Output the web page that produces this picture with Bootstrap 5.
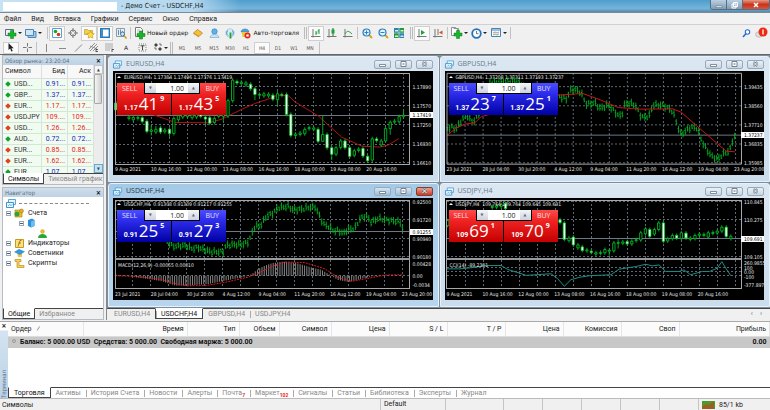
<!DOCTYPE html>
<html lang="ru">
<head>
<meta charset="utf-8">
<meta name="viewport" content="width=device-width, initial-scale=1">
<title>Демо Счет - USDCHF,H4</title>
<link href="https://cdn.jsdelivr.net/npm/bootstrap@5.3.0/dist/css/bootstrap.min.css" rel="stylesheet">
<style>
:root{--ui:"Open Sans","Noto Sans",sans-serif;--slim:Roboto,"Open Sans",sans-serif;--num:"DejaVu Sans Condensed","DejaVu Sans",sans-serif}
body{height:100vh;font:7px/10px var(--ui);color:#222;background:#f0f0f0;overflow:hidden}
button,input{font:inherit;color:inherit;border:0;background:none;padding:0;margin:0}
a{color:inherit;text-decoration:none}
svg{display:block;overflow:visible}
.titlebar{height:13px;background:linear-gradient(#4f9dcb,#74b4dc 70%,#5a88a8);border-bottom:1px solid #7a8b98}
.titlebar .glow{background:linear-gradient(90deg,#c6e2f3,#b4d8ef 80%,#74b4dc00);padding-left:3px;width:240px;height:12px;font:7px/10px "DejaVu Sans Condensed",sans-serif}
.titlebar .patch{width:114px;height:9px;background:#fff}
.winctl{height:10px;border:1px solid #526f86;border-top:0;border-radius:0 0 3px 3px;overflow:hidden}
.winctl button{width:16px;height:9px;background:linear-gradient(#b9d0e1,#7f9db5);border-right:1px solid #526f86}
.winctl .quit{width:26px;border:0;background:linear-gradient(#e59a86,#c9341b 50%,#d8553c)}
.menubar{height:12px;padding-left:4px;gap:10px;background:#f2f2f2;border-bottom:1px solid #d0d0d0;font-family:var(--slim)}
.toolrow{height:16px;padding-left:3px}
.toolrow.second{height:14px;border-bottom:1px solid #666}
.tool{width:16px;height:15px;display:flex;align-items:center;justify-content:center;flex:none}
.second .tool{height:12px;font:5px/10px var(--num);color:#555}
.tool.wide{width:auto;gap:2px;padding:0 2px}
.tool.drop{width:20px;gap:1px}
.tool.drop::after{content:"";border:2px solid transparent;border-top-color:#222;border-bottom:0}
.tool.on{background:#fbfbfb;box-shadow:inset 0 0 0 1px #cfcfcf}
.sep{width:1px;height:12px;background:#c2c2c2;margin:0 1px}
.grip{width:3px;height:12px;border-left:1px solid #bbb;border-right:1px solid #bbb;margin:0 1px 0 3px}
.tooltext{font:6px/10px "DejaVu Sans",sans-serif;color:#222}
.workspace{min-height:0}
.side{width:106px;padding:0 2px;flex:none;font-family:var(--slim)}
.pane{border:1px solid #b4bcc4;background:#f0f0f0}
.pane+.pane{margin-top:2px}
.panehead{height:9px;padding:0 2px;background:linear-gradient(#cfdeeb,#bdd2e5);color:#5d6f80;font:6px/9px var(--num)}
.closex{font:bold 7px/8px var(--num);color:#111}
.watch{background:#fff;height:108px;overflow:hidden}
.watch table{width:91px;table-layout:fixed;line-height:10px}
.watch .bid{width:26px}
.watch th,.watch td{height:11px;padding:0 2px;border-right:1px solid #d9e3da;border-bottom:1px solid #d4e6d6;text-align:right;white-space:nowrap;background:#f1fcf1}
.watch th{height:13px;font-weight:400;background:#f8f8f8;border-color:#ddd}
.watch th:first-child,.watch td:first-child{text-align:left;color:#333}
.watch .up{color:#2323c4}.watch .dn{color:#ec2020}
.dia{display:inline-block;width:4px;height:4px;transform:rotate(45deg);margin:0 4px 0 1px;background:#11a22c}
.dia.red{background:#e2411a}
.bar{width:9px;background:#ececec}
.bar button{width:9px;height:9px;border:1px solid #c0c4c8;background:#f6f6f6;font:4px/6px var(--num);color:#444}
.bar .low{background:#bfe2f5;border-color:#6aa9cc}
.thumb{width:8px;height:30px;border:1px solid #a8a8a8;border-radius:1px;background:linear-gradient(90deg,#f5f5f5,#cfcfcf)}
.tabline{border-top:1px solid #444;height:11px}
.tabline button{color:#888;padding:0 5px;height:10px;line-height:10px;position:relative;white-space:nowrap}
.tabline button+button::before{content:"";float:left;width:1px;height:7px;margin:2px 0 0 -5px;background:#aaa}
.tabline .cur{background:#fff;color:#111;border:1px solid #444;border-top-color:#fff;margin-top:-1px;height:11px}
.tabline .cur+button::before{background:transparent}
.pane .tabline button{padding:0 4px}
.tree{background:#fff;padding:1px 3px;line-height:10px}
.tree ul{list-style:none;margin:0;padding:0}
.tree li>div{height:10px;gap:3px}
.tree .kid{padding-left:13px}.tree .kid2{padding-left:32px}
.tgl{width:5px;height:5px;border:1px solid #9aa7b5;background:#fff;position:relative}
.tgl::after{content:"";position:absolute;left:0;right:0;top:1px;height:1px;background:#47617c}
.dash{width:70px;border-top:1px dashed #888}
.desk{background:#f0f0f0;border-left:1px solid #888;min-width:0}
.mdi{display:grid;grid-template-columns:1fr 1fr;grid-template-rows:127fr 124fr;background:#7d8d9b;gap:1px;padding:1px 0 1px 1px}
.chartwin{background:linear-gradient(#dbe7f2,#cbdcec);padding:0 5px 6px 4px;min-width:0;border:1px solid #e8f2fa;border-radius:3px 3px 0 0}
.chartwin.active{background:linear-gradient(#a5cae8,#b7d5ee)}
.chartwin header{height:14px;color:#6b7a88}
.chartwin.active header{color:#26384a}
.cwbtn{width:17px;height:9px;border:1px solid #98a9b8;border-radius:2px;background:linear-gradient(#eaf1f7,#c8d6e3);display:flex;align-items:center;justify-content:center}
.active .cwbtn{background:linear-gradient(#d5e6f3,#9dbdd8)}
.active .cwbtn.kill{background:linear-gradient(#e8a191,#c93b22);border-color:#8c3a2c}
.screen{background:#000;color:#e6e6e6;font:5px/7px var(--num);min-height:0;overflow:hidden}
.plotrow{min-height:0;padding:2px 0 0 2px}
.plot{position:relative;min-width:0}
.plot svg{position:absolute;inset:0;width:100%;height:100%}
.yaxis{width:23px;position:relative;line-height:4px}
.yaxis span{position:absolute;left:3px;transform:translateY(-50%)}
.yaxis .now{background:#fff;color:#000;left:0;right:0;padding-left:3px;line-height:6px}
.xaxis{height:11px;position:relative;margin-left:2px}
.xaxis span{position:absolute;top:2px;white-space:nowrap}
.quote{position:absolute;left:9px;top:1px;white-space:nowrap}
.quote::before{content:"";position:absolute;left:-7px;top:2px;border:2px solid transparent;border-top:0;border-bottom-color:#fff}
.study{position:absolute;left:3px;top:69%}
.trade{position:absolute;left:2px;top:10px;width:109px;height:32px;background:#000;gap:1px}
.trade>button{width:54px;height:32px;color:#fff;text-align:left;background:linear-gradient(#ff4a4a,#ef2222 35%,#c40000)}
.blue .trade>button{background:linear-gradient(#4d4dff,#2b2bea 35%,#0000a4)}
.trade em{font:7px/12px var(--ui);display:block;padding:0 5px;opacity:.85}
.trade .buy em{text-align:right;padding-right:7px}
.trade .px{justify-content:center;line-height:20px;height:20px}
.trade b{font:bold 7px/9px var(--slim);margin-top:9px}
.trade strong{font:400 17px/20px var(--ui);margin:-1px 1px 0}
.trade sup{font:bold 7px/8px var(--ui);top:0;margin-left:1px}
.lots{position:absolute;left:27px;top:0;width:56px;height:11px;background:#000;padding:0 1px 1px}
.lots input{width:32px;flex:1;background:#fff;color:#222;text-align:right;font:7px/9px var(--ui);padding-right:4px;min-width:0}
.lots button{width:11px;background:linear-gradient(#f5f5f5,#ccd3e2);color:#667;font:4px/10px var(--num)}
.mditabs{height:12px;padding-left:2px}
.mditabs,.bottom{font-family:var(--slim)}
.terminal{height:77px;border-top:1px solid #aaa;margin-top:1px}
.vert{width:9px;background:linear-gradient(#fff 8px,#d3e3f1 9px,#bcd2e6)}
.vert span{writing-mode:vertical-rl;transform:rotate(180deg);color:#55708b;font:6px/8px var(--num)}
.orders{width:100%;table-layout:fixed;line-height:10px}
.orders th{height:14px;font-weight:400;text-align:right;padding:0 3px;border-right:1px solid #e6e6e6;border-bottom:1px solid #ddd;background:#fbfbfb}
.orders th:first-child{text-align:left}
.orders td{height:12px;background:#c8c8c8;font-weight:700;padding:0 3px;color:#111}
.cA{width:75px}.cB{width:104px}.cC{width:52px}.cD{width:40px}.cE{width:52px}.cF{width:58px}
.ring{display:inline-block;width:4px;height:4px;border:1px solid #999;border-radius:50%;margin:0 4px 1px 1px}
.tabline i{font:bold 5px/4px var(--slim);color:#e22;vertical-align:-2px}
.status{height:12px;border-top:1px solid #bbb;padding-left:2px}
.status span{height:11px;border-left:1px solid #c4c4c4;padding-left:3px;width:39px}
.status .profile{width:65px}.status .hint{width:58px}.status .link{width:72px}
</style>
<script src="https://cdn.jsdelivr.net/npm/bootstrap@5.3.0/dist/js/bootstrap.bundle.min.js"></script>
</head>
<body class="d-flex flex-column">

<svg width="0" height="0" class="position-absolute">
 <defs>
  <g id="winicon"><path d="M2.500 .5h7v5h-7z" fill="#eaf6ff" stroke="#5aa6d6"/><path d="M.5 3.500h7v5h-7z" fill="#eaf6ff" stroke="#3f93ca"/><path d="M2 7l1.500-1.500L5 6.500l1.500-1" fill="none" stroke="#3f93ca" stroke-width=".7"/></g>
  <g id="plus"><path d="M2.500 0h3v2.500H8v3H5.500V8h-3V5.500H0v-3h2.500z" fill="#16b62a" stroke="#0a7a18" stroke-width=".5"/></g>
 </defs>
</svg>

<div class="titlebar d-flex justify-content-between">
  <div class="glow d-flex align-items-center"><div class="patch"></div><span class="ms-1">- Демо Счет - USDCHF,H4</span></div>
  <div class="winctl d-flex">
    <button aria-label="Свернуть"><svg width="16" height="8"><path d="M5 5h6v1.500H5z" fill="#fff" stroke="#445" stroke-width=".4"/></svg></button>
    <button aria-label="Развернуть"><svg width="16" height="8"><path d="M6.500 1.500h4v4h-4zM5 3h4v4H5z" fill="none" stroke="#fff"/></svg></button>
    <button class="quit" aria-label="Закрыть"><svg width="26" height="8"><path d="M11 2l4 4m0-4l-4 4" stroke="#fff" stroke-width="1.500"/></svg></button>
  </div>
</div>

<nav class="menubar d-flex align-items-center">
  <a href="#">Файл</a><a href="#">Вид</a><a href="#">Вставка</a><a href="#">Графики</a><a href="#">Сервис</a><a href="#">Окно</a><a href="#">Справка</a>
</nav>

<div class="toolrow d-flex align-items-center">
  <button class="tool drop" aria-label="Новый график"><svg width="12" height="11"><path d="M.5 1.500h8v6h-8z" fill="#eef" stroke="#668"/><use href="#plus" x="3" y="2.500"/></svg></button>
  <button class="tool drop" aria-label="Профили"><svg width="12" height="11"><path d="M3 3.500h8v6H3z" fill="#9dc8e8" stroke="#4a88b8"/><path d="M.5 1.500h8v6h-8z" fill="#cfe5f5" stroke="#4a88b8"/></svg></button>
  <span class="sep ms-1"></span>
  <button class="tool on" aria-label="Обзор рынка"><svg width="10" height="10"><path d="M.5.5h9v9h-9z" fill="#fff" stroke="#5b9fd0"/><circle cx="3.500" cy="3.500" r="1.800" fill="#16a82c"/><circle cx="6.500" cy="6.500" r="1.800" fill="#d93a1b"/></svg></button>
  <button class="tool" aria-label="Окно данных"><svg width="10" height="10"><circle cx="5" cy="5" r="3" fill="none" stroke="#777"/><path d="M5 0v4M5 6v4M0 5h4M6 5h4" stroke="#777"/></svg></button>
  <button class="tool on" aria-label="Навигатор"><svg width="11" height="11"><path d="M.5 1.500h3l1 1h4v4h-8z" fill="#f4cf52" stroke="#b98d17" stroke-width=".6"/><path d="M6.500 3l1.200 2.300 2.600.4-1.900 1.800.5 2.600-2.400-1.200-2.300 1.200.4-2.600L2.700 5.700l2.600-.4z" fill="#ffdf3f" stroke="#c0921a" stroke-width=".6"/></svg></button>
  <button class="tool on" aria-label="Терминал"><svg width="10" height="10"><path d="M.7.7h8.600v8.600H.7z" fill="#fff" stroke="#2b77b8" stroke-width="1.400"/><path d="M1 1h2v8H1z" fill="#3c8fce"/></svg></button>
  <button class="tool" aria-label="Тестер"><svg width="11" height="11"><path d="M.5.5h8v8h-8z" fill="#e9eef3" stroke="#8b9cab"/><path d="M2.500 2v5M4.500 1.500v4M6.500 3v3" stroke="#6a8cab"/><circle cx="6.500" cy="6" r="2" fill="#cfe7f8" stroke="#47a"/><path d="M8 7.500l2.500 3" stroke="#c90" stroke-width="1.300"/></svg></button>
  <span class="sep"></span>
  <button class="tool wide"><svg width="11" height="12"><path d="M1.500.5h5l2 2v7h-7z" fill="#fff" stroke="#777"/><path d="M3 3h3M3 5h3" stroke="#999" stroke-width=".7"/><use href="#plus" x="3" y="4"/></svg><span class="tooltext">Новый ордер</span></button>
  <button class="tool" aria-label="MetaEditor"><svg width="10" height="10"><path d="M.5 5l4-3.500L9.500 5 6 8.500z" fill="#f5bf3a" stroke="#b27a11" stroke-width=".7"/><path d="M.5 5l5.500 3.500v1L.5 6z" fill="#d0922a"/></svg></button>
  <button class="tool" aria-label="Чат"><svg width="11" height="11"><circle cx="5.500" cy="3.500" r="2.700" fill="#5db2ea" stroke="#2a7dba" stroke-width=".6"/><path d="M1 9.500c0-4 9-4 9 0z" fill="#c9e4f6" stroke="#6aa5cc" stroke-width=".6"/></svg></button>
  <button class="tool" aria-label="Сигналы"><svg width="11" height="11"><circle cx="5" cy="5" r="4.200" fill="#d9ecf6" stroke="#9cc6da" stroke-width=".8"/><path d="M2.500 2.500c-1.200 2-1 4 .5 5M7.500 2.500c1.200 2 1 4-.5 5" fill="none" stroke="#3b90c0"/><path d="M5.500 4.500v6" stroke="#1aa536" stroke-width="1.800"/></svg></button>
  <button class="tool wide"><svg width="11" height="11"><path d="M1 4c0-4 8-4 8 0z" fill="#4ba3dc" stroke="#2775a8" stroke-width=".5"/><path d="M1.500 4h7l-1 5h-5z" fill="#f1c544"/><circle cx="7.500" cy="7.500" r="3" fill="#dd2b1c"/><path d="M6.300 6.500h2.400v2H6.300z" fill="#fff"/></svg><span class="tooltext">Авто-торговля</span></button>
  <span class="grip"></span>
  <button class="tool on" aria-label="Бары"><svg width="10" height="10"><path d="M2 1v8.500M0 8.500h9.500" stroke="#777"/><path d="M5 3v4M8 1v5M5 5h1.500M6.500 3H8" stroke="#1a9a30"/></svg></button>
  <button class="tool" aria-label="Свечи"><svg width="10" height="10"><path d="M2 1v8.500M0 8.500h9.500" stroke="#777"/><path d="M6 0v8" stroke="#117a24"/><path d="M4.500 1.500h3v4h-3z" fill="#18a532"/></svg></button>
  <button class="tool" aria-label="Линия"><svg width="10" height="10"><path d="M2 1v8.500M0 8.500h9.500" stroke="#777"/><path d="M2 6c2-4 4-3 7 0" fill="none" stroke="#2aa744"/></svg></button>
  <span class="sep"></span>
  <button class="tool" aria-label="Крупнее"><svg width="11" height="11"><path d="M6.500 6.500L10 10" stroke="#d9a520" stroke-width="2"/><circle cx="4.500" cy="4.500" r="3.500" fill="#e2f2fd" stroke="#2c81c0" stroke-width="1.200"/><path d="M4.500 2.500v4M2.500 4.500h4" stroke="#2c81c0"/></svg></button>
  <button class="tool" aria-label="Мельче"><svg width="11" height="11"><path d="M6.500 6.500L10 10" stroke="#d9a520" stroke-width="2"/><circle cx="4.500" cy="4.500" r="3.500" fill="#e2f2fd" stroke="#2c81c0" stroke-width="1.200"/><path d="M2.500 4.500h4" stroke="#2c81c0"/></svg></button>
  <button class="tool" aria-label="Окна мозаикой"><svg width="10" height="10"><path d="M0 0h4.700v4.700H0zM5.300 5.300H10V10H5.300z" fill="#2c7fc0"/><path d="M5.300 0H10v4.700H5.300zM0 5.300h4.700V10H0z" fill="#239a3a"/><path d="M1 2h3v1.500H1zM6.500 2h3v1.500h-3zM1 7.500h3V9H1zM6.500 7.500h3V9h-3z" fill="#d9f0d9"/></svg></button>
  <span class="grip"></span>
  <button class="tool on" aria-label="Автопрокрутка"><svg width="10" height="10"><path d="M2 1v8.500M0 8.500h9.500" stroke="#777"/><path d="M4 2l4 2.500L4 7z" fill="#18a532"/></svg></button>
  <button class="tool" aria-label="Сдвиг"><svg width="10" height="10"><path d="M2 1v8.500M0 8.500h9.500M5 1v6" stroke="#777"/><path d="M9.500 2.500L6 4.500l3.500 2z" fill="#d9531b"/></svg></button>
  <span class="sep"></span>
  <button class="tool drop" aria-label="Индикаторы"><svg width="12" height="12"><path d="M.5.5h4l2 2v6h-6zM2.500 1.500h5v7" fill="#fff" stroke="#777" stroke-width=".8"/><use href="#plus" x="3" y="3.500"/></svg></button>
  <button class="tool drop" aria-label="Период"><svg width="11" height="11"><circle cx="5.500" cy="5.500" r="4.300" fill="#fff" stroke="#1f73bd" stroke-width="1.800"/><path d="M5.500 3v2.700H7.500" fill="none" stroke="#555" stroke-width=".8"/></svg></button>
  <button class="tool drop" aria-label="Шаблоны"><svg width="11" height="10"><path d="M.5.5h9v8h-9z" fill="#f4faff" stroke="#4186ba"/><path d="M.5 2h9" stroke="#4186ba"/><path d="M2 5l2-1 2 1 2-1" stroke="#c55" fill="none" stroke-width=".7"/><path d="M2 7l2-1 2 1 2-1" stroke="#3a9a48" fill="none" stroke-width=".7"/></svg></button>
  <span class="sep"></span>
  <div class="ms-auto d-flex">
    <button class="tool" aria-label="Поиск"><svg width="9" height="9"><circle cx="5.500" cy="3" r="2.200" fill="#fff" stroke="#2b6cd0" stroke-width="1.100"/><path d="M4 4.500L1 8" stroke="#2b6cd0" stroke-width="1.600"/></svg></button>
    <button class="tool" aria-label="Уведомления"><svg width="14" height="12"><ellipse cx="4" cy="7.500" rx="3.500" ry="2.800" fill="#ddd" stroke="#aaa" stroke-width=".6"/><circle cx="8" cy="5" r="4.500" fill="#ee2a12"/><path d="M8 2.500v5" stroke="#fff" stroke-width="1.300"/></svg></button>
  </div>
</div>

<div class="toolrow second d-flex align-items-center">
  <button class="tool on" aria-label="Курсор"><svg width="8" height="9"><path d="M1.500 0v7l1.700-1.500L4.300 8.500l1.400-.6-1.200-2.700h2.200z" fill="#222"/></svg></button>
  <button class="tool" aria-label="Перекрестие"><svg width="9" height="9"><path d="M4.500 0v3.500M4.500 5.500V9M0 4.500h3.500M5.500 4.500H9" stroke="#777"/></svg></button>
  <span class="sep"></span>
  <button class="tool" aria-label="Вертикальная линия"><svg width="9" height="8"><path d="M4.500 0v8" stroke="#888"/></svg></button>
  <button class="tool" aria-label="Горизонтальная линия"><svg width="9" height="8"><path d="M1 4.500h7" stroke="#888"/></svg></button>
  <button class="tool" aria-label="Трендовая линия"><svg width="9" height="8"><path d="M1 7.500L8 .5" stroke="#888"/></svg></button>
  <button class="tool" aria-label="Канал"><svg width="10" height="9"><path d="M0 6L6 0M1 8L8 1M4 8l5-5M1 3l7 3" stroke="#777" stroke-width=".8"/><path d="M7 6v3M7 6.500h2M7 8.500h2" stroke="#222" stroke-width=".7"/></svg></button>
  <button class="tool" aria-label="Фибоначчи"><svg width="10" height="9"><path d="M0 1h8M0 3h8M0 5h8M0 7h5" stroke="#999" stroke-width=".8"/><path d="M7 6v3M7 6.500h2" stroke="#222" stroke-width=".7"/></svg></button>
  <button class="tool" aria-label="Текст"><span class="tooltext">A</span></button>
  <button class="tool" aria-label="Метка"><svg width="9" height="9"><path d="M1 1h7v7H1z" fill="none" stroke="#888" stroke-dasharray="1 1"/><path d="M2.500 2.800h4M4.500 2.800v4.500" stroke="#444"/></svg></button>
  <button class="tool drop" aria-label="Стрелки"><svg width="10" height="9"><path d="M1 2l2-2 2 2-2 2zM5 6l2-2 2 2-2 2z" fill="#444"/><path d="M2 4v2h2M6 1h2v2" fill="none" stroke="#555" stroke-width=".8"/></svg></button>
  <span class="grip ms-0"></span>
  <button class="tool">M1</button><button class="tool">M5</button><button class="tool">M15</button><button class="tool">M30</button><button class="tool">H1</button><button class="tool on">H4</button><button class="tool">D1</button><button class="tool">W1</button><button class="tool">MN</button>
  <span class="sep"></span>
</div>

<main class="workspace d-flex flex-grow-1">
  <aside class="side d-flex flex-column">
    <section class="pane">
      <div class="panehead d-flex justify-content-between"><span>Обзор рынка: 23:20:04</span><button class="closex" aria-label="Закрыть">×</button></div>
      <div class="watch d-flex justify-content-between">
        <table>
          <colgroup><col><col class="bid"><col class="bid"></colgroup>
          <thead><tr><th>Символ</th><th>Бид</th><th>Аск</th></tr></thead>
          <tbody id="rates"></tbody>
        </table>
        <div class="bar d-flex flex-column"><button aria-label="Вверх">▲</button><div class="thumb"></div><button class="low mt-auto" aria-label="Вниз">▼</button></div>
      </div>
      <div class="tabline d-flex"><button class="cur">Символы</button><button>Тиковый график</button></div>
    </section>
    <section class="pane d-flex flex-column flex-grow-1">
      <div class="panehead d-flex justify-content-between"><span>Навигатор</span><button class="closex" aria-label="Закрыть">×</button></div>
      <div class="tree flex-grow-1"><ul>
        <li><div class="d-flex align-items-center"><svg width="10" height="9"><use href="#winicon"/></svg><span class="dash"></span></div></li>
        <li><div class="d-flex align-items-center"><span class="tgl"></span><svg width="11" height="10"><path d="M1 2h7v7H1z" fill="#f1bd2d" stroke="#a67c10" stroke-width=".6"/><circle cx="7.500" cy="3" r="2" fill="#e8ab22" stroke="#9c7210" stroke-width=".5"/><circle cx="3" cy="6" r="2.500" fill="#2aa53b"/></svg><span>Счета</span></div></li>
        <li><div class="kid d-flex align-items-center"><span class="tgl"></span><svg width="8" height="10"><path d="M1 2l4-1.500L7.500 2v6L4 9.500 1 8z" fill="#2c92dc"/><path d="M4 3.500L7.500 2v6L4 9.500z" fill="#6cbcf0"/></svg></div></li>
        <li><div class="kid2 d-flex align-items-center"><svg width="9" height="9"><circle cx="4.500" cy="2.500" r="2.200" fill="#e9b530"/><path d="M0 9c0-5.500 9-5.500 9 0z" fill="#27a737"/></svg></div></li>
        <li><div class="d-flex align-items-center"><span class="tgl"></span><svg width="11" height="9"><path d="M1.500.5h8v8h-8z" fill="#fbe17a" stroke="#c39a21"/><path d="M4 7.500l2-6h1.500M4.500 4h2.500" fill="none" stroke="#a05d10" stroke-width=".8"/></svg><span>Индикаторы</span></div></li>
        <li><div class="d-flex align-items-center"><span class="tgl"></span><svg width="11" height="9"><path d="M3 4h5v4H4z" fill="#f1c544"/><path d="M0 3l5-3 6 2.500L6 6z" fill="#3a98d8"/></svg><span>Советники</span></div></li>
        <li><div class="d-flex align-items-center"><span class="tgl"></span><svg width="11" height="9"><path d="M1 .5h6v2H5v4h5v2H3v-6H1z" fill="#f6d257" stroke="#bd9119" stroke-width=".7"/></svg><span>Скрипты</span></div></li>
      </ul></div>
      <div class="tabline d-flex"><button class="cur">Общие</button><button>Избранное</button></div>
    </section>
  </aside>

  <section class="desk d-flex flex-column flex-grow-1">
    <div class="mdi flex-grow-1" id="mdi"></div>
    <div class="mditabs tabline d-flex">
      <button>EURUSD,H4</button><button class="cur">USDCHF,H4</button><button>GBPUSD,H4</button><button>USDJPY,H4</button>
      <span class="ms-auto pe-2 text-secondary">‹ &nbsp; &nbsp;›</span>
    </div>
  </section>
</main>

<section class="terminal bottom d-flex">
  <div class="vert d-flex flex-column justify-content-between align-items-center"><button class="closex" aria-label="Закрыть">×</button><span>Терминал</span></div>
  <div class="flex-grow-1 d-flex flex-column bg-white">
    <table class="orders">
      <colgroup><col class="cA"><col class="cB"><col class="cC"><col class="cD"><col class="cE"><col class="cF"><col class="cF"><col class="cF"><col class="cF"><col class="cF"><col class="cF"><col></colgroup>
      <thead><tr><th>Ордер &nbsp; ⁄</th><th>Время</th><th>Тип</th><th>Объем</th><th>Символ</th><th>Цена</th><th>S / L</th><th>T / P</th><th>Цена</th><th>Комиссия</th><th>Своп</th><th>Прибыль</th></tr></thead>
      <tbody><tr><td colspan="11"><span class="ring"></span>Баланс: 5 000.00 USD&nbsp; Средства: 5 000.00&nbsp; Свободная маржа: 5 000.00</td><td class="text-end">0.00</td></tr></tbody>
    </table>
    <div class="tabline d-flex mt-auto">
      <button class="cur">Торговля</button><button>Активы</button><button>История Счета</button><button>Новости</button><button>Алерты</button><button>Почта<i>7</i></button><button>Маркет<i>102</i></button><button>Сигналы</button><button>Статьи</button><button>Библиотека</button><button>Эксперты</button><button>Журнал</button>
    </div>
  </div>
</section>

<footer class="status bottom d-flex align-items-center">
  <div class="flex-grow-1">Символы</div>
  <span class="profile">Default</span><span class="hint"></span><span></span><span></span><span></span><span></span><span></span>
  <span class="link d-flex align-items-center gap-1"><svg width="13" height="8"><path d="M0 0h13v8H0z" fill="#4d9a2c"/><path d="M1 8V5M3 8V4M5 8V3M7 8V4M9 8V2M11 8V1" stroke="#d13a1d" stroke-width="1.200"/></svg>85/1 kb</span>
</footer>

<script>
const rates=[["USD...","0.91...",1],["GBP...","1.37...",1],["EUR...","1.17...",0],["USDJPY","109....",0],["USD...","1.26...",0],["AUD...","0.72...",1],["EUR...","0.85...",0],["EUR...","1.62...",0],["EUR...","1.07...",1]];
document.getElementById("rates").innerHTML=rates.map(r=>{const c=r[2]?"up":"dn";return `<tr><td><span class="dia ${r[2]?"":"red"}"></span>${r[0]}</td><td class="${c}">${r[1]}</td><td class="${c}">${r[1]}</td></tr>`}).join("");

const grid="#5c6874";
const path=(d,c,extra="")=>`<path d="${d}" fill="none" stroke="${c}" vector-effect="non-scaling-stroke" ${extra}/>`;
const line=(p,c,extra)=>path("M"+p.map(q=>q.join(" ")).join("L"),c,extra);
const at=(pts,x)=>{for(let i=1;i<pts.length;i++)if(x<=pts[i][0]){const a=pts[i-1],b=pts[i];return a[1]+(b[1]-a[1])*(x-a[0])/(b[0]-a[0])}return pts[pts.length-1][1]};
/* candle: [x, bodyTop, bodyBottom, filled, wickTop, wickBottom] */
const candles=list=>list.map(([x,a,b,f,h,l])=>path(`M${x} ${h??a-6}V${l??b+6}`,"#00b424",'stroke-width=".9"')+`<rect x="${x-3.500}" y="${a}" width="7" height="${Math.max(2,b-a)}" fill="${f?"#fff":"#000"}" stroke="#00cc28" stroke-width=".8" vector-effect="non-scaling-stroke"/>`).join("");
const bars=runs=>runs.map(pts=>{let d="",i=0;for(let x=pts[0][0];x<=pts[pts.length-1][0];x+=6.75,i++){const y=at(pts,x),w=Math.sin(i*2.3)*4,r=6+Math.abs(Math.sin(i*1.7))*6;d+=`M${x} ${y+w-r}V${y+w+r}M${x-3} ${y+w-3}h3M${x} ${y+w+4}h3`}return path(d,"#00b222",'stroke-width=".9"')}).join("");

const T1=["9 Aug 2021","10 Aug 16:00","12 Aug 00:00","13 Aug 08:00","16 Aug 16:00","18 Aug 00:00","19 Aug 08:00","20 Aug 16:00"];
const T2=["23 Jul 2021","28 Jul 04:00","30 Jul 20:00","4 Aug 12:00","9 Aug 04:00","11 Aug 20:00","16 Aug 12:00","19 Aug 04:00","23 Aug 20:00"];
const charts=[
{n:"EURUSD",q:"1.17384 1.17496 1.17376 1.17419",x0:18,x1:904,y0:57,y1:325,h:[97,153,209,265,320],now:[181,"1.17419"],t:T1,
 y:[[97,"1.17890"],[153,"1.17570"],[209,"1.17250"],[265,"1.16930"],[320,"1.16610"]],c:["1.17","41","9","43","5"],
 body:()=>line([[18,140],[150,185],[200,202],[300,203],[340,192],[400,163],[440,146],[480,133],[506,122],[540,124],[560,142],[630,183],[700,245],[760,271],[815,274],[840,268],[872,249]],"#b41414")+
 candles([[20,145,165,1],[60,186,190],[73,187,194],[87,187,190],[100,188,199,1],[114,198,228,1],[127,224,228,0,210,240],[141,222,230,0,212,236],[155,218,230,1],[168,224,229],[182,222,234,1,216,245],[195,190,234],[209,182,194],[222,178,186],[236,180,185],[250,180,188],[263,176,186],[276,178,184,1],[290,186,192,1,180,210],[303,188,204,1],[317,190,202],[330,180,184],[344,178,184,0,174,200],[358,138,183],[372,78,138],[385,82,86,1],[398,84,88],[412,86,92],[426,90,103,1],[439,103,120,1,98,136],[453,120,122],[466,118,124],[480,119,124],[493,122,134,1],[507,118,135,0,110,152],[520,120,122,1],[534,120,178,1],[547,178,240,1],[561,236,240],[575,233,237],[589,222,235],[602,217,220],[616,218,222],[629,222,257,1],[643,237,257,0,180,258],[656,237,276,1],[670,276,295,1,270,312],[683,276,295],[697,256,275],[710,256,276,1],[724,276,301,1],[738,285,298],[751,280,284],[764,278,300,1],[778,301,314,1],[792,250,312],[805,250,255,1],[819,256,268],[832,220,256,0,212,258],[846,201,220,0,196,238],[859,198,201],[873,185,200],[886,181,185,0,166,190]])},
{n:"GBPUSD",blue:1,q:"1.37208 1.37311 1.37193 1.37237",x0:22,x1:907,y0:57,y1:325,h:[97,153,209,265,320],now:[239,"1.37237"],t:T2,
 y:[[97,"1.39435"],[153,"1.38560"],[209,"1.37710"],[265,"1.36835"],[320,"1.35985"]],c:["1.37","23","7","25","1"],
 body:()=>bars([[[23,220],[35,215],[48,222],[60,205],[70,190],[80,180],[100,200],[110,190],[125,160],[150,85],[230,80],[290,120]],[[360,125],[370,130],[380,133],[395,105],[412,107],[425,115],[440,148],[468,145],[480,160],[493,157],[506,150],[521,165],[536,180],[546,185],[556,150],[566,145],[581,148],[591,155],[601,180],[616,188],[631,180],[641,150],[673,152],[686,160],[701,170],[711,200],[723,236],[736,230],[750,218],[770,215],[780,235],[790,262],[802,280],[816,300],[836,310],[850,295],[871,285],[881,252],[890,238]]])+line([[22,240],[50,218],[75,207],[105,203],[125,185],[354,122],[430,117],[486,137],[536,158],[601,163],[701,162],[726,172],[776,215],[806,240],[836,265],[861,286],[888,288]],"#c81414")},
{n:"USDCHF",blue:1,act:1,q:"0.91308 0.91309 0.91217 0.91255",x0:18,x1:905,y0:52,y1:322,h:[57,113,169,225,283],now:[147,"0.91255"],t:T2,split:232,study:"MACD(12,26,9) -0.00055 0.00010",
 y:[[57,"0.92500"],[113,"0.91720"],[169,"0.90940"],[225,"0.90180"],[245,"0.00428"],[283,"0.00"],[310,"-0.0034"]],c:["0.91","25","5","27","3"],
 body:()=>{const m=[[20,280],[60,283],[80,288],[120,293],[160,300],[200,313],[240,313],[300,308],[340,300],[380,292],[410,286],[430,278],[450,262],[470,252],[490,245],[520,240],[560,243],[600,255],[640,265],[665,280],[690,296],[720,302],[750,295],[790,285],[860,282],[887,284]];let d="";for(let x=22;x<890;x+=6.75)d+=`M${x} 283V${at(m,x)}`;
 return bars([[[20,80],[26,90]],[[175,180],[195,193],[230,190],[250,200],[270,197],[290,205],[310,210],[345,210],[352,190],[375,188],[405,187],[420,180],[430,155],[440,130],[455,132],[475,100],[490,95],[510,75],[540,72],[555,82],[580,80],[600,75],[620,72],[632,95],[645,125],[665,135],[680,148],[690,144],[705,155],[720,140],[740,140],[755,110],[775,100],[790,120],[810,108],[850,115],[875,118],[888,145]]])+path(d,"#a8a8a8",'stroke-width=".8"')+line([[20,283],[80,285],[120,290],[160,295],[200,307],[235,314],[290,313],[350,303],[420,287],[450,275],[490,255],[530,241],[590,243],[650,262],[690,288],[730,300],[770,293],[830,281],[887,280]],"#e01818",'stroke-dasharray="2 1"')}},
{n:"USDJPY",q:"109.764 109.764 109.645 109.691",x0:22,x1:908,y0:52,y1:322,h:[57,113,169,225,257,270,283],now:[169,"109.691"],t:T1,split:232,study:"CCI(14) -89.2301",
 y:[[57,"110.845"],[113,"110.275"],[225,"109.105"],[243,"260.9855"],[257,"100"],[271,"0.00"],[285,"-100"],[309,"-377.897"]],c:["109","69","1","70","9"],
 body:()=>candles([[24,115,130],[158,72,75],[171,70,74],[185,66,72],[198,63,78,1],[348,99,112,1],[362,112,121,1],[375,122,172,1],[389,168,176],[402,165,189,1],[416,189,198],[429,195,206,1],[443,204,207],[456,208,212,1],[470,213,217],[484,212,215],[497,203,213],[510,205,208,0,203,222],[524,183,207],[537,182,184,0,172,200],[551,180,184],[564,179,186,1],[578,178,186],[591,173,176],[605,152,174],[619,140,155],[632,142,163,1],[646,142,156],[659,122,142],[673,122,178,1],[686,170,177],[700,160,170],[713,160,168,1],[727,152,170],[741,153,168,1],[754,168,172],[768,160,170],[781,156,160],[795,157,160],[808,152,165],[822,151,154],[835,147,153],[849,135,147],[862,135,163,1],[876,163,170]])+line([[22,262],[60,262],[100,258],[140,252],[185,252],[205,264],[240,275],[260,282],[335,277],[355,292],[375,315],[395,295],[420,288],[450,283],[515,280],[540,263],[590,255],[620,248],[640,253],[660,250],[680,270],[720,270],[735,265],[755,280],[790,270],[812,270],[835,260],[849,240],[862,262],[876,283]],"#1b8f84")}
];
document.getElementById("mdi").innerHTML=charts.map(c=>{
 const W=c.x1-c.x0,H=c.y1-c.y0,py=y=>((y-c.y0)/H*100).toFixed(2);
 let g="";for(let x=c.x0+54.2;x<c.x1-5;x+=54.2)g+=`M${x} ${c.y0}V${c.y1}`;
 c.h.forEach(y=>g+=`M${c.x0} ${y}H${c.x1}`);
 const crisp='shape-rendering="crispEdges"';
 let s=path(g,grid,'stroke-dasharray="2 2" '+crisp)+path(`M${c.x0} ${c.now[0]}H${c.x1}`,"#6c7886",crisp)+c.body()
  +path(`M${c.x0} ${c.y0+1}H${c.x1}V${c.y1-1}H${c.x0}Z`,"#a8a8a8",crisp);
 if(c.split)s+=path(`M${c.x0} ${c.split}H${c.x1}`,"#999",'stroke-width="2" '+crisp);
 const side=(cls,lab,big,sup)=>`<button class="${cls}"><em>${lab}</em><span class="px d-flex"><b>${c.c[0]}</b><strong>${big}</strong><sup>${sup}</sup></span></button>`;
 return `<article class="chartwin d-flex flex-column ${c.act?"active":""} ${c.blue?"blue":""}">
 <header class="d-flex align-items-center gap-1"><svg width="9" height="9" viewBox="0 0 10 9"><use href="#winicon"/></svg><span class="flex-grow-1">${c.n},H4</span>
 <button class="cwbtn" aria-label="Свернуть"><svg width="7" height="5"><path d="M.5 2.500h6v2h-6z" fill="#fff" stroke="#567" stroke-width=".7"/></svg></button><button class="cwbtn" aria-label="Развернуть"><svg width="7" height="6"><path d="M1 .5h5v5H1z" fill="#fff" stroke="#567" stroke-width=".8"/><path d="M2.500 2.500h2v1h-2z" fill="#567"/></svg></button><button class="cwbtn kill" aria-label="Закрыть"><svg width="7" height="6"><path d="M1.500 1l4 4m0-4l-4 4" stroke="#567" stroke-width="2"/><path d="M1.500 1l4 4m0-4l-4 4" stroke="#fff"/></svg></button></header>
 <div class="screen d-flex flex-column flex-grow-1"><div class="plotrow d-flex flex-grow-1"><div class="plot flex-grow-1">
 <svg viewBox="${c.x0} ${c.y0} ${W} ${H}" preserveAspectRatio="none">${s}</svg>
 <div class="quote">${c.n},H4&nbsp; ${c.q}</div>${c.study?`<div class="study">${c.study}</div>`:""}
 <div class="trade d-flex">${side("sell","SELL",c.c[1],c.c[2])}${side("buy","BUY",c.c[3],c.c[4])}<div class="lots d-flex"><button aria-label="Меньше">▼</button><input aria-label="Объем ${c.n}" value="1.00"><button aria-label="Больше">▲</button></div></div>
 </div><div class="yaxis">${c.y.map(v=>`<span style="top:${py(v[0])}%">${v[1]}</span>`).join("")}<span class="now" style="top:${py(c.now[0])}%">${c.now[1]}</span></div></div>
 <div class="xaxis">${c.t.map((t,i)=>`<span style="left:${(i*108.3/(W+72)*100).toFixed(2)}%">${t}</span>`).join("")}</div></div></article>`}).join("");
</script>
</body>
</html>
